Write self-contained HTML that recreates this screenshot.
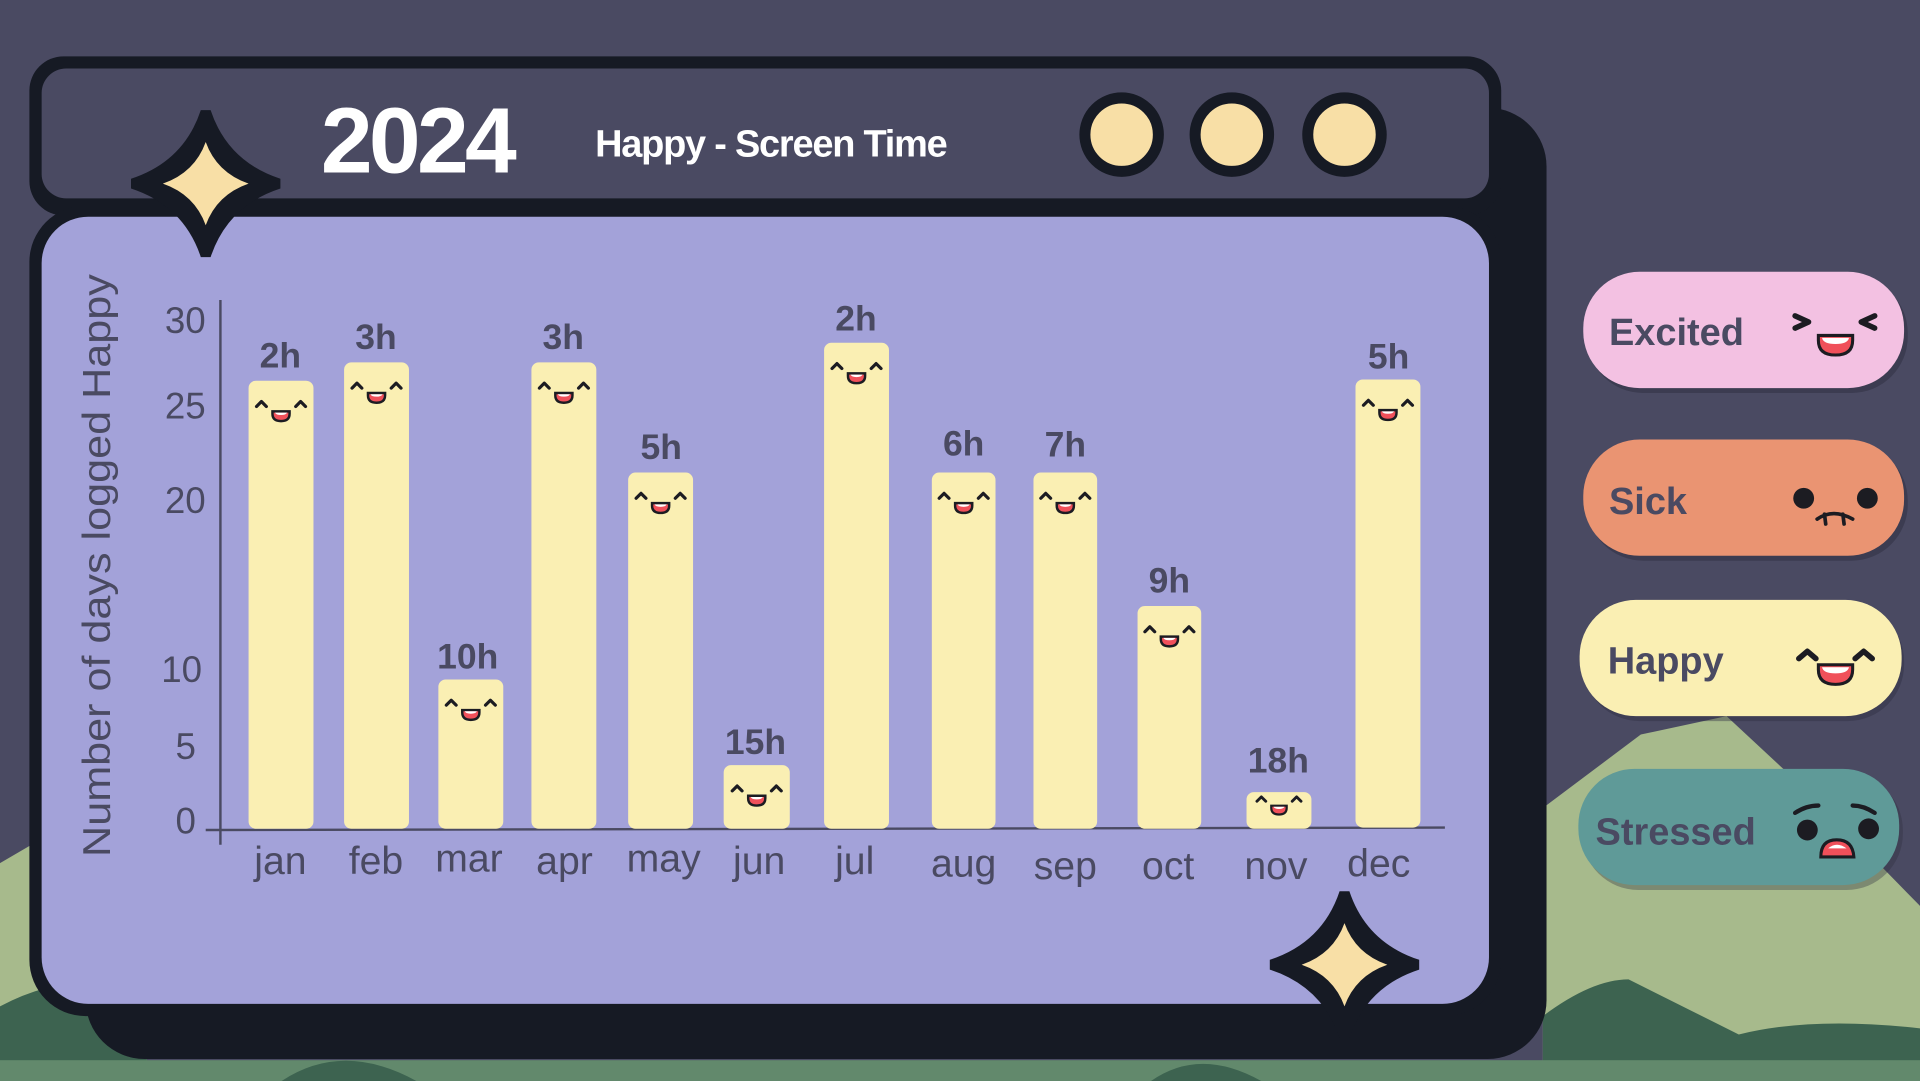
<!DOCTYPE html>
<html><head><meta charset="utf-8"><style>
html,body{margin:0;padding:0;background:#4a4a62;overflow:hidden}
svg{display:block}
text{font-family:"Liberation Sans",sans-serif}
</style></head><body>
<svg width="1920" height="1081" viewBox="0 0 1568 883" preserveAspectRatio="none" xmlns="http://www.w3.org/2000/svg">
<defs>
<g id="face">
<path d="M-20,5 L-16,1 L-12,5 M12,5 L16,1 L20,5" stroke="#1c1c22" stroke-width="2.6" fill="none" stroke-linecap="round" stroke-linejoin="round"/>
<path d="M-7,9 L7,9 L7,11 Q7,17 0,17 Q-7,17 -7,11 Z" fill="#f0505a" stroke="#1c1c22" stroke-width="2"/>
<path d="M-5,10 L5,10 Q4,12 0,12 Q-4,12 -5,10Z" fill="#fff"/>
</g>
<g id="spark">
<path d="M-4,-60 L4,-60 Q18,-18 61,-4 L61,4 Q18,18 4,60 L-4,60 Q-18,18 -61,4 L-61,-4 Q-18,-18 -4,-60Z" fill="#161a24"/>
<path d="M0,-34 Q9,-9 35,0 Q9,9 0,34 Q-9,9 -35,0 Q-9,-9 0,-34Z" fill="#f8dfa6"/>
</g>
</defs>
<rect width="1568" height="883" fill="#4a4a62"/>
<!-- hills -->
<path d="M0,705 L60,670 L120,690 L120,883 L0,883Z" fill="#a7ba8c"/>
<path d="M0,822 Q60,790 120,810 L120,883 L0,883Z" fill="#3d6350"/>
<path d="M1260,660 L1340,600 L1410,585 L1480,650 L1568,740 L1568,883 L1260,883Z" fill="#a7ba8c"/>
<path d="M1260,830 Q1300,800 1330,800 Q1370,820 1420,845 Q1480,830 1568,840 L1568,883 L1260,883Z" fill="#3d6350"/>
<rect x="0" y="866" width="1568" height="17" fill="#62896c"/>
<path d="M230,883 Q280,850 340,883Z M940,883 Q980,855 1030,883Z" fill="#3d6350"/>
<!-- back shadow window -->
<rect x="70" y="88" width="1193" height="777" rx="48" fill="#161a24"/>
<!-- title bar -->
<rect x="24" y="46" width="1202" height="130" rx="28" fill="#161a24"/>
<rect x="34" y="56" width="1182" height="106" rx="20" fill="#4a4a62"/>
<!-- body -->
<rect x="24" y="168" width="1202" height="662" rx="46" fill="#161a24"/>
<rect x="34" y="177" width="1182" height="643" rx="38" fill="#a3a2d9"/>
<text x="262" y="141" font-size="76" font-weight="bold" fill="#fff" letter-spacing="-3">2024</text>
<text x="486" y="128" font-size="31" font-weight="bold" fill="#fff" letter-spacing="-1">Happy - Screen Time</text>
<g fill="#f8dfa6" stroke="#161a24" stroke-width="9">
<circle cx="916" cy="110" r="30"/><circle cx="1006" cy="110" r="30"/><circle cx="1098" cy="110" r="30"/>
</g>
<use href="#spark" transform="translate(168,150)"/>
<use href="#spark" transform="translate(1098,788)"/>
<!-- axes -->
<line x1="180" y1="245" x2="180" y2="690" stroke="#4a4a62" stroke-width="2"/>
<line x1="168" y1="678" x2="1180" y2="676" stroke="#4a4a62" stroke-width="2"/>
<g font-size="30" fill="#4a4a62" text-anchor="end">
<text x="168" y="272">30</text><text x="168" y="342">25</text><text x="168" y="419">20</text>
<text x="165" y="557">10</text><text x="160" y="620">5</text><text x="160" y="681">0</text>
</g>
<text transform="translate(90,462) rotate(-90)" font-size="32" fill="#4a4a62" text-anchor="middle" textLength="476" lengthAdjust="spacingAndGlyphs">Number of days logged Happy</text>
<!-- bars -->
<g fill="#faefb3">
<rect x="203" y="311" width="53" height="366" rx="6"/>
<rect x="281" y="296" width="53" height="381" rx="6"/>
<rect x="358" y="555" width="53" height="122" rx="6"/>
<rect x="434" y="296" width="53" height="381" rx="6"/>
<rect x="513" y="386" width="53" height="291" rx="6"/>
<rect x="591" y="625" width="54" height="52" rx="6"/>
<rect x="673" y="280" width="53" height="397" rx="6"/>
<rect x="761" y="386" width="52" height="291" rx="6"/>
<rect x="844" y="386" width="52" height="291" rx="6"/>
<rect x="929" y="495" width="52" height="182" rx="6"/>
<rect x="1018" y="647" width="53" height="30" rx="6"/>
<rect x="1107" y="310" width="53" height="366" rx="6"/>
</g>
<use href="#face" transform="translate(229.5,327)"/>
<use href="#face" transform="translate(307.5,312)"/>
<use href="#face" transform="translate(384.5,571)"/>
<use href="#face" transform="translate(460.5,312)"/>
<use href="#face" transform="translate(539.5,402)"/>
<use href="#face" transform="translate(618,641)"/>
<use href="#face" transform="translate(699.5,296)"/>
<use href="#face" transform="translate(787,402)"/>
<use href="#face" transform="translate(870,402)"/>
<use href="#face" transform="translate(955,511)"/>
<use href="#face" transform="translate(1044.5,650) scale(0.9)"/>
<use href="#face" transform="translate(1133.5,326)"/>
<g font-size="29" font-weight="bold" fill="#4a4a62" text-anchor="middle">
<text x="229" y="300">2h</text><text x="307" y="285">3h</text><text x="382" y="546">10h</text>
<text x="460" y="285">3h</text><text x="540" y="375">5h</text><text x="617" y="616">15h</text>
<text x="699" y="270">2h</text><text x="787" y="372">6h</text><text x="870" y="373">7h</text>
<text x="955" y="484">9h</text><text x="1044" y="631">18h</text><text x="1134" y="301">5h</text>
</g>
<g font-size="32" fill="#4a4a62" text-anchor="middle">
<text x="229" y="714">jan</text><text x="307" y="714">feb</text><text x="383" y="712">mar</text>
<text x="461" y="714">apr</text><text x="542" y="712">may</text><text x="620" y="714">jun</text>
<text x="698" y="714">jul</text><text x="787" y="716">aug</text><text x="870" y="718">sep</text>
<text x="954" y="718">oct</text><text x="1042" y="718">nov</text><text x="1126" y="716">dec</text>
</g>
<!-- legend -->
<g>
<rect x="1296" y="226" width="262" height="95" rx="46" fill="#2e2e40" opacity="0.5"/>
<rect x="1293" y="222" width="262" height="95" rx="46" fill="#f3c1e2"/>
<rect x="1296" y="363" width="262" height="95" rx="46" fill="#2e2e40" opacity="0.5"/>
<rect x="1293" y="359" width="262" height="95" rx="46" fill="#ea9472"/>
<rect x="1293" y="494" width="262" height="95" rx="46" fill="#2e2e40" opacity="0.4"/>
<rect x="1290" y="490" width="263" height="95" rx="46" fill="#faefb3"/>
<rect x="1292" y="632" width="262" height="95" rx="46" fill="#2e2e40" opacity="0.35"/>
<rect x="1289" y="628" width="262" height="95" rx="46" fill="#5f9a98"/>
</g>
<g font-size="31" font-weight="bold" fill="#4a4a62">
<text x="1314" y="282">Excited</text><text x="1314" y="420">Sick</text>
<text x="1313" y="550">Happy</text><text x="1303" y="690">Stressed</text>
</g>
<!-- legend faces -->
<g stroke="#1c1c22" stroke-width="4.5" fill="none" stroke-linecap="round" stroke-linejoin="round">
<path d="M1466,258 L1477,263 L1466,268 M1531,258 L1520,263 L1531,268"/>
<path d="M1484,424 Q1497,415 1513,424 M1490,420 L1491,428 M1505,420 L1506,428" stroke-width="3"/>
<path d="M1469,538 L1476,532 L1483,538 M1515,538 L1522,532 L1529,538"/>
<path d="M1466,664 Q1475,658 1485,658 M1513,658 Q1522,658 1531,664" stroke-width="3.5"/>
</g>
<g fill="#1c1c22">
<circle cx="1473" cy="407" r="8.5"/><circle cx="1525" cy="407" r="8.5"/>
<circle cx="1476" cy="678" r="8.5"/><circle cx="1526" cy="677" r="8.5"/>
</g>
<g stroke="#1c1c22" stroke-width="2.5">
<path d="M1485,274 L1513,274 L1513,278 Q1513,290 1499,290 Q1485,290 1485,278Z" fill="#f0505a"/>
<path d="M1485,543 L1513,543 L1513,547 Q1513,559 1499,559 Q1485,559 1485,547Z" fill="#f0505a"/>
<path d="M1487,700 Q1487,686 1500,686 Q1513,686 1514,700Z" fill="#f0505a"/>
</g>
<g fill="#fff">
<path d="M1488,276 L1510,276 Q1509,281 1499,281 Q1489,281 1488,276Z"/>
<path d="M1488,545 L1510,545 Q1509,550 1499,550 Q1489,550 1488,545Z"/>
<path d="M1493,693 Q1500,687 1508,693Z"/>
</g>
</svg>
</body></html>
